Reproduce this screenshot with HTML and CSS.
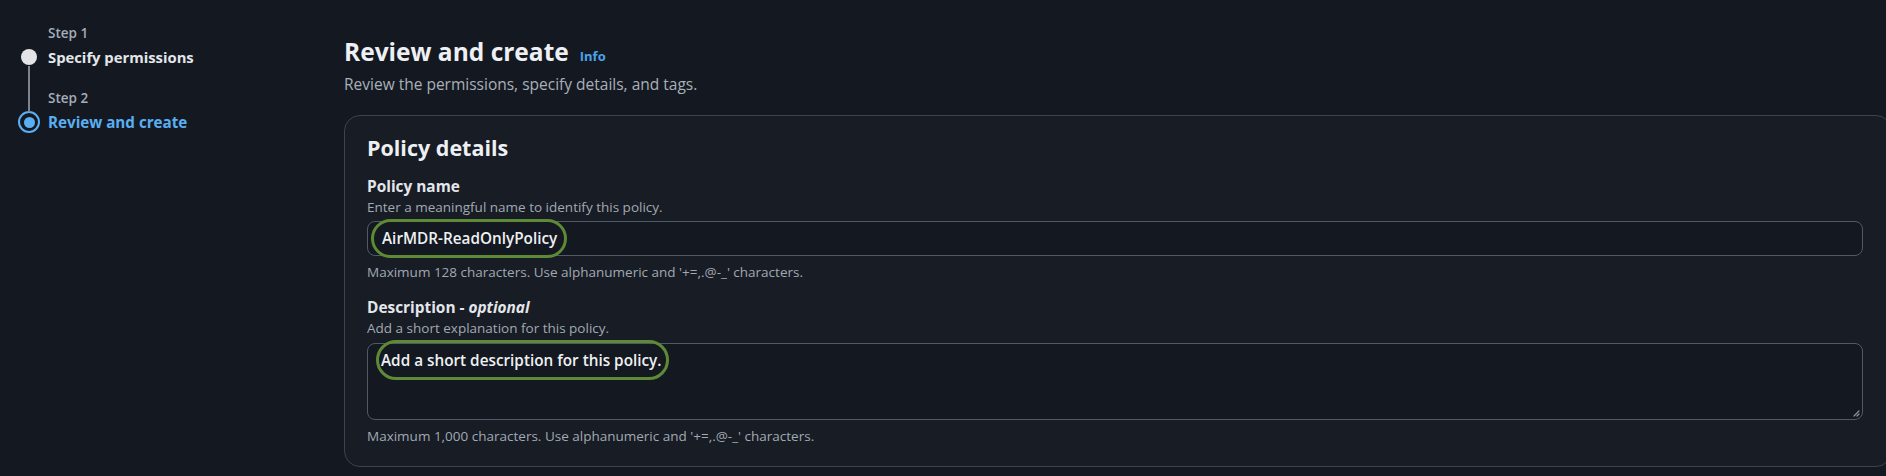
FILE: index.html
```html
<!DOCTYPE html>
<html lang="en">
<head>
<meta charset="utf-8">
<title>Review and create</title>
<link rel="stylesheet" href="styles.css">
</head>
<body>
<div class="layout">
  <nav class="wizard-nav">
    <ol class="steps">
      <li class="step step-done">
        <span class="step-label">Step 1</span>
        <span class="dot"></span>
        <span class="step-title">Specify permissions</span>
      </li>
      <li class="step step-active">
        <span class="step-label">Step 2</span>
        <span class="ring"><span class="ring-core"></span></span>
        <span class="step-title">Review and create</span>
      </li>
    </ol>
  </nav>
  <main class="content">
    <header class="page-header">
      <h1 class="page-title"><span>Review and create</span> <a class="info-link">Info</a></h1>
      <p class="page-desc">Review the permissions, specify details, and tags.</p>
    </header>
    <section class="card">
      <h2 class="card-title">Policy details</h2>
      <div class="field">
        <div class="field-label">Policy name</div>
        <div class="field-hint">Enter a meaningful name to identify this policy.</div>
        <div class="input"><span class="mark mark-input">AirMDR-ReadOnlyPolicy</span></div>
        <div class="field-constraint">Maximum 128 characters. Use alphanumeric and '+=,.@-_' characters.</div>
      </div>
      <div class="field field-desc">
        <div class="field-label">Description - <i>optional</i></div>
        <div class="field-hint">Add a short explanation for this policy.</div>
        <div class="textarea">
          <span class="mark mark-textarea">Add a short description for this policy.</span>
          <svg class="grip" width="8" height="8" viewBox="0 0 8 8"><path d="M7 2 L2 7 M7 5 L5 7" stroke="#8a94a0" stroke-width="1.2" stroke-linecap="round"/></svg>
        </div>
        <div class="field-constraint">Maximum 1,000 characters. Use alphanumeric and '+=,.@-_' characters.</div>
      </div>
    </section>
  </main>
</div>
</body>
</html>
```

FILE: styles.css
```css
* { box-sizing: border-box; }
html, body {
  margin: 0;
  padding: 0;
  background: #141921;
  overflow: hidden;
}
body {
  font-family: "Open Sans", "Noto Sans", sans-serif;
  color: #e6e9ee;
  height: 476px;
}
.layout {
  display: grid;
  grid-template-columns: 344px 1fr;
}

/* ---- wizard nav ---- */
.wizard-nav {
  padding: 25px 0 0 19px;
}
.steps {
  list-style: none;
  margin: 0;
  padding: 0;
}
.step {
  display: grid;
  grid-template-columns: 20px auto;
  grid-template-rows: 16px 32px;
  column-gap: 9px;
  align-items: center;
}
.step + .step { margin-top: 17px; }
.step-label {
  grid-column: 2;
  grid-row: 1;
  font-size: 13.5px;
  line-height: 16px;
  color: #a4adb8;
  font-weight: 600;
}
.step-title {
  grid-column: 2;
  grid-row: 2;
  font-size: 14.8px;
  font-weight: 700;
  line-height: 32px;
  color: #e3e6ea;
}
.step-active .step-title { color: #5aaef2; font-size: 15.2px; }
.dot {
  grid-column: 1;
  grid-row: 2;
  justify-self: center;
  width: 16px;
  height: 16px;
  border-radius: 50%;
  background: #e4e4e8;
  position: relative;
}
.dot::after {
  content: "";
  position: absolute;
  left: 7px;
  top: 17px;
  width: 2px;
  height: 46px;
  background: #7b848f;
}
.ring {
  grid-column: 1;
  grid-row: 2;
  justify-self: center;
  width: 22px;
  height: 22px;
  border-radius: 50%;
  border: 2.5px solid #5aaef2;
  display: flex;
  align-items: center;
  justify-content: center;
}
.ring-core {
  width: 11px;
  height: 11px;
  border-radius: 50%;
  background: #5aaef2;
}

/* ---- content ---- */
.content {
  padding-top: 37px;
}
.page-header { margin: 0; }
.page-title {
  margin: 0;
  height: 30px;
  font-size: 24.5px;
  line-height: 30px;
  font-weight: 700;
  color: #eef0f3;
  display: flex;
  align-items: baseline;
  gap: 11px;
}
.info-link {
  font-size: 13px;
  line-height: 16px;
  font-weight: 700;
  color: #4ba3ea;
}
.page-desc {
  margin: 7px 0 0;
  font-size: 15.5px;
  line-height: 20px;
  color: #a9b0b9;
}
.card {
  margin-top: 21px;
  margin-right: -6px;
  border: 1px solid #3b434e;
  border-radius: 16px;
  background: #171c25;
  padding: 18px 28px 22px 22px;
}
.card-title {
  margin: 0;
  font-size: 21.5px;
  line-height: 28px;
  font-weight: 700;
  color: #eef0f3;
}
.field { margin-top: 15px; }
.field-desc { margin-top: 18px; }
.field-label {
  font-size: 15.4px;
  line-height: 20px;
  font-weight: 700;
  color: #e3e6ea;
}
.field-label i { font-weight: 700; }
.field-hint {
  margin-top: 2px;
  font-size: 13.5px;
  line-height: 16px;
  color: #a2a9b2;
}
.field-constraint {
  margin-top: 8px;
  font-size: 13.5px;
  line-height: 16px;
  color: #a2a9b2;
}
.input {
  margin-top: 6px;
  height: 35px;
  border: 1.5px solid #505a66;
  border-radius: 8px;
  background: #141921;
  padding-left: 3px;
  display: flex;
  align-items: center;
}
.textarea {
  margin-top: 7px;
  height: 77px;
  border: 1.5px solid #505a66;
  border-radius: 8px;
  background: #141921;
  padding: 0 0 0 8px;
  position: relative;
}
.mark {
  display: inline-block;
  border: 3px solid #5f8a35;
  border-radius: 20px;
  font-size: 15.3px;
  font-weight: 600;
  color: #eef0f3;
}
.mark-input {
  height: 39px;
  line-height: 33px;
  padding: 0 7px 0 8px;
}
.mark-textarea {
  margin-top: -4px;
  height: 40px;
  line-height: 34px;
  padding: 0 5px 0 2px;
}
.grip {
  position: absolute;
  right: 2px;
  bottom: 2px;
}
```
